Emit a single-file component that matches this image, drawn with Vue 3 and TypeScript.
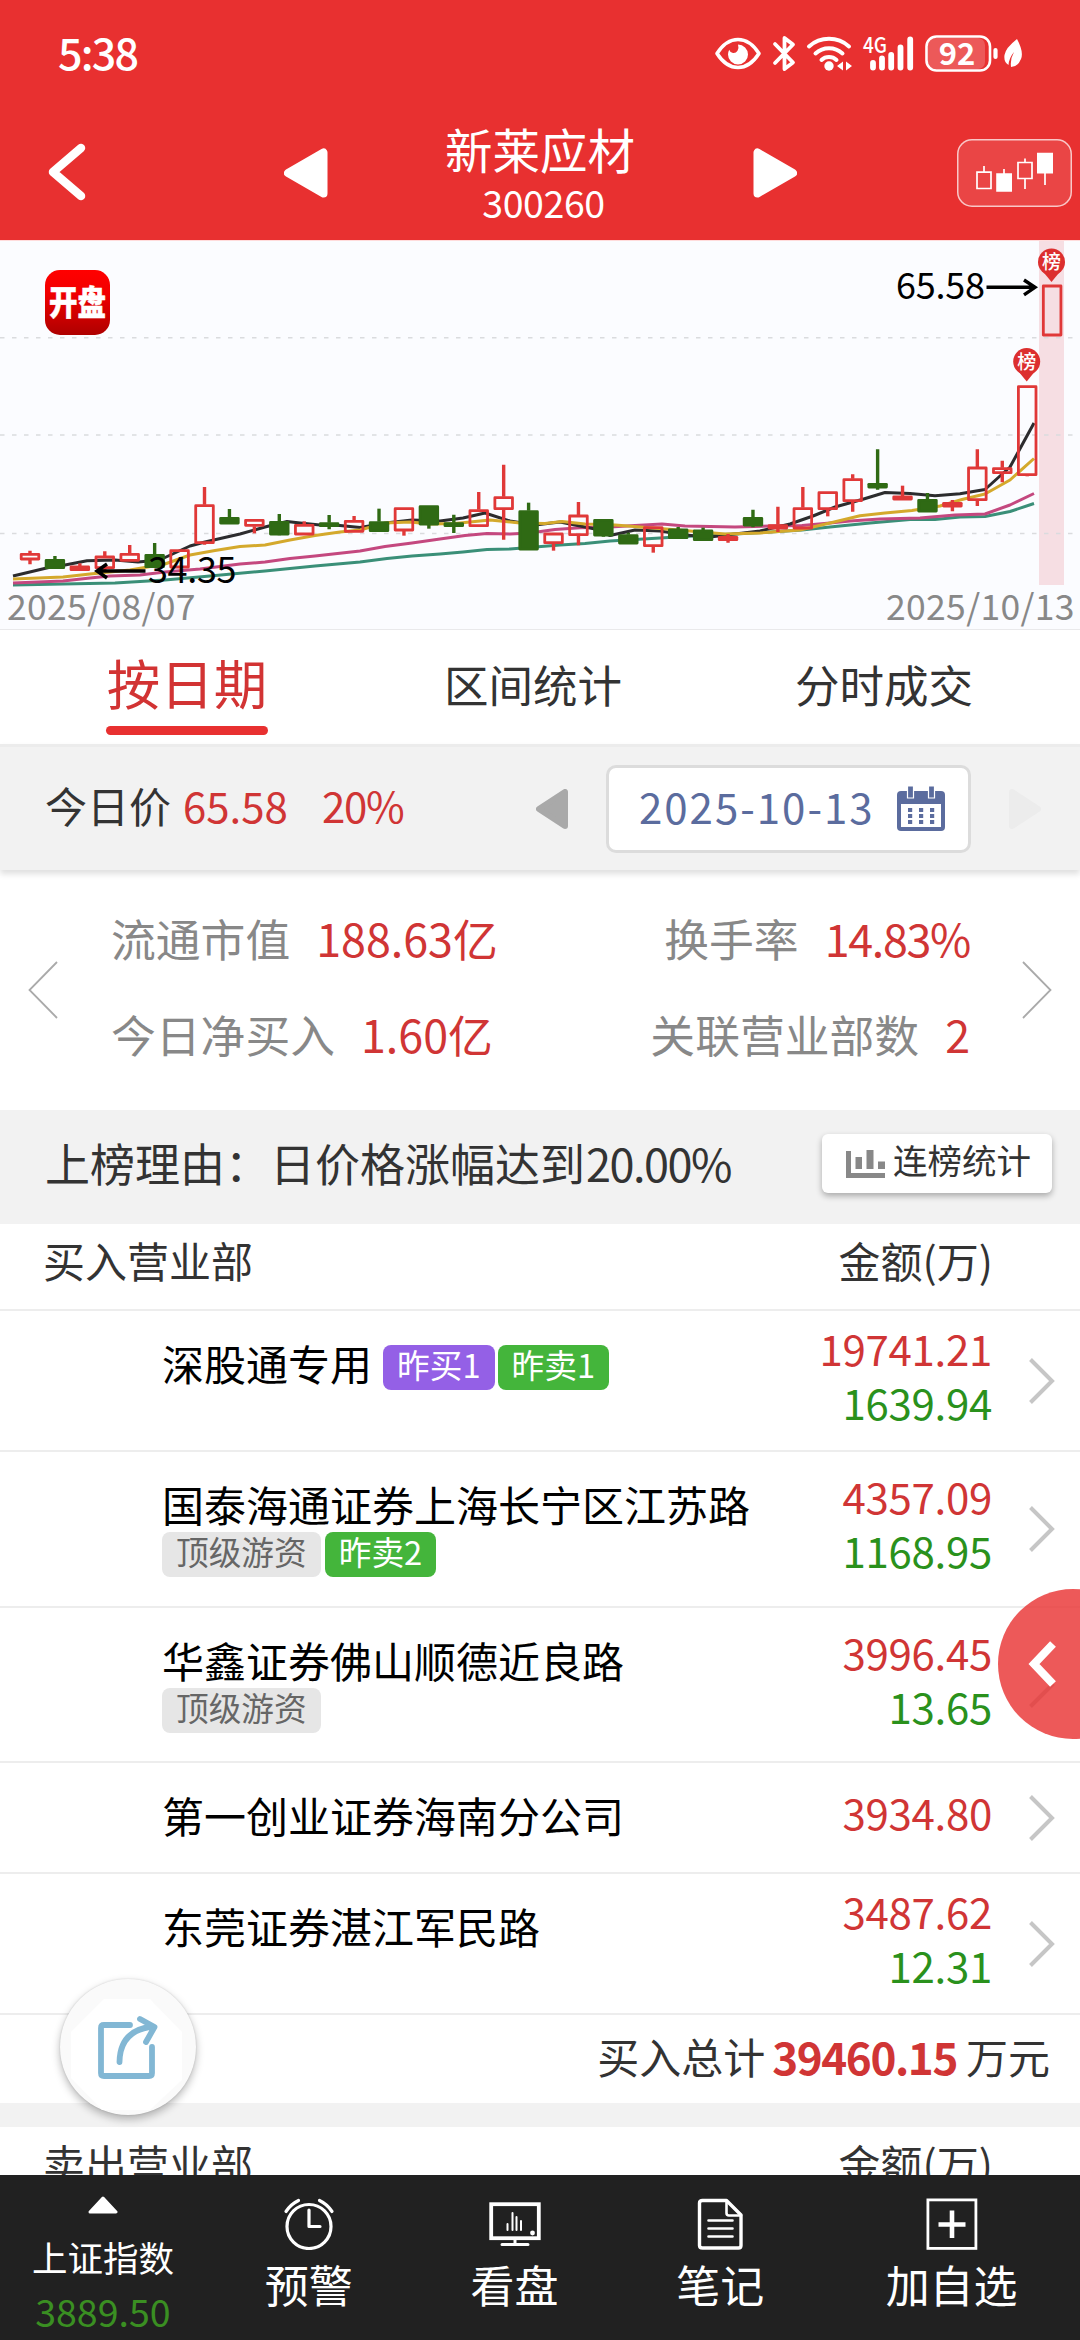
<script setup lang="ts">
type Kind = 'r' | 'g'
// kind, high, body top, body bottom, low (chart units, three per pixel)
type Candle = [Kind, number, number, number, number]

const candles: Candle[] = [
  ['r', 932, 940, 960, 973], ['g', 948, 958, 986, 986], ['r', 970, 978, 992, 992], ['r', 934, 948, 986, 990],
  ['r', 915, 940, 964, 964], ['g', 909, 943, 983, 983], ['r', 929, 929, 984, 984], ['r', 741, 794, 911, 914],
  ['g', 807, 832, 852, 852], ['r', 838, 838, 859, 880], ['g', 822, 844, 885, 886], ['r', 844, 853, 885, 885],
  ['g', 825, 848, 860, 868], ['r', 828, 841, 877, 877], ['g', 806, 845, 875, 875], ['r', 803, 803, 873, 887],
  ['g', 797, 797, 855, 866], ['g', 824, 848, 860, 879], ['r', 756, 809, 860, 860], ['r', 674, 770, 809, 899],
  ['g', 788, 812, 930, 930], ['r', 879, 879, 911, 932], ['r', 786, 825, 887, 916], ['g', 837, 838, 888, 890],
  ['g', 878, 884, 912, 912], ['r', 860, 860, 920, 938], ['g', 861, 867, 896, 896], ['g', 863, 870, 902, 902],
  ['r', 882, 889, 902, 908], ['g', 809, 832, 858, 862], ['r', 800, 854, 867, 876], ['r', 741, 803, 867, 867],
  ['r', 755, 755, 809, 829], ['r', 703, 716, 785, 815], ['g', 628, 730, 744, 749], ['r', 737, 768, 780, 780],
  ['g', 759, 778, 816, 816], ['r', 780, 787, 801, 814], ['r', 628, 681, 782, 798], ['r', 662, 683, 701, 727],
  ['r', 437, 437, 707, 709], ['r', 135, 135, 288, 288],
]

const bars = candles.map(([kind, hi, top, bottom, lo], i) => {
  const x = 30 + i * 24.93
  return {
    x,
    color: kind === 'r' ? '#e03838' : '#2f6a14',
    fill: kind === 'r' ? 'none' : '#2f6a14',
    hi: hi / 3,
    lo: lo / 3,
    top: top / 3,
    bottom: bottom / 3,
    y: top / 3 + 1,
    h: Math.max((bottom - top) / 3 - 2, 1.5),
  }
})

const averages = [
  { color: '#3a8f78', points: '13,345 63,344 115,343 165,340 210,336 265,331 315,326 360,322 387,318.5 412,316 440,314 463,312 487,309.5 510,309 535,307 560,305 585,303.5 610,301 660,298 710,295 735,294 762,292.5 802,290 830,287 870,283 910,279.5 935,279.5 960,277 985,276.5 1010,271.5 1034,263.5' },
  { color: '#c4487f', points: '13,343 63,341 90,338 110,336 140,335 165,332 200,329 240,324 265,322 290,318.5 315,316 360,311 385,306.5 412,303 440,299 465,295.5 487,293.5 510,294 530,293 555,289.5 580,287.7 610,287 635,285.5 662,284 685,286 735,287 770,286 802,285.5 830,283 850,281 880,279 920,278 955,275 985,274 1010,265 1034,253.5' },
  { color: '#2c2c2e', points: '13,336 55,326 65,325 87,320.7 115,320 138,322 160,320 165,317.5 190,306 205,302 240,294 265,287 287,281.5 300,283 320,285 340,285.5 360,287.5 390,282.5 412,280 440,281 463,278 485,273 510,281 535,285 560,282 580,286 595,289 610,295.5 635,290 660,291 685,295 710,297 735,294 760,291 790,284 813,276 835,267 862,259.5 885,252.5 910,253.5 935,255.7 960,253.7 985,249.5 1010,227 1034,183' },
  { color: '#d4a92c', points: '13,339 63,337 90,334 130,330 165,324 190,315 215,310.5 240,306.5 265,305 290,300 315,295.5 340,292 360,290 385,283 410,282 430,284 455,283.5 490,280 520,283 545,283.5 562,281.5 585,284 615,285 640,287 660,288.5 690,291 725,294 760,293 800,290 830,283 860,275.7 885,273 912,270.5 940,266 962,259.5 985,254 1010,240 1034,218.5' },
]

const gridLines = [97.7, 195, 293.5]
const pins = [{ x: 1051.5, y: 22 }, { x: 1026.7, y: 121.5 }]

interface Tag { text: string; tone: 'violet' | 'green' | 'gray' }
interface Seat { name: string; inline?: boolean; tags: Tag[]; buy: string; sell?: string; height: number }

const seats: Seat[] = [
  { name: '深股通专用', inline: true, tags: [{ text: '昨买1', tone: 'violet' }, { text: '昨卖1', tone: 'green' }], buy: '19741.21', sell: '1639.94', height: 141 },
  { name: '国泰海通证券上海长宁区江苏路', tags: [{ text: '顶级游资', tone: 'gray' }, { text: '昨卖2', tone: 'green' }], buy: '4357.09', sell: '1168.95', height: 156 },
  { name: '华鑫证券佛山顺德近良路', tags: [{ text: '顶级游资', tone: 'gray' }], buy: '3996.45', sell: '13.65', height: 155 },
  { name: '第一创业证券海南分公司', tags: [], buy: '3934.80', height: 111 },
  { name: '东莞证券湛江军民路', tags: [], buy: '3487.62', sell: '12.31', height: 141 },
]
</script>

<template>
  <div class="screen">
    <header class="top">
      <div class="status">
        <span class="time">5:38</span>
        <svg class="status-icons" width="312" height="60" viewBox="712 24 312 60" fill="none" stroke="#fff" stroke-linecap="round" stroke-linejoin="round">
          <path d="M717 53.500Q726 39.500 738 39.500T759 53.500Q750 67.500 738 67.500T717 53.500Z" stroke-width="3.600" />
          <path d="M738 44.500a10 10 0 1 1-10 10q0-2.500 1.200-4.800a4.600 4.600 0 0 0 8.300 1.100q1.600-3.100.500-6.300Z" fill="#fff" stroke="none" />
          <path d="M775 44l18 18.500-8.500 6.500V38l8.500 6.500L775 63" stroke-width="3.800" />
          <path d="M809 46.500a30 30 0 0 1 40 0M815.500 53.500a20 20 0 0 1 27 0M821.500 60a11 11 0 0 1 15 0" stroke-width="4" />
          <circle cx="829" cy="66" r="4.700" fill="#fff" stroke="none" />
          <path d="M843 61.500v9l-6-4.500zM846 61.500v9l6-4.500z" fill="#fff" stroke="none" />
          <path d="M873 63v4.500M882 58.500v9M891.200 55v12.500M900.500 47.500v20M910.200 39.500v28" stroke-width="5.800" />
          <text x="863" y="53" textLength="24" lengthAdjust="spacingAndGlyphs" class="net">4G</text>
          <rect x="928" y="38" width="57" height="31" rx="7" fill="#fff" fill-opacity=".2" stroke="none" />
          <rect x="926.500" y="36.500" width="63.500" height="34" rx="10" stroke-width="2.600" />
          <text x="957" y="65" text-anchor="middle" class="battery">92</text>
          <path d="M995.500 50v7" stroke-width="4.200" />
          <path d="M1017 39q7 13 4 20-3 8-10 8-1-8 3-15-5 6-5.500 13-5-3-4-10 1-7 12.500-16Z" fill="#fff" stroke="none" />
        </svg>
      </div>
      <div class="nav">
        <svg class="back" width="44" height="66" viewBox="0 0 44 66"><path d="M38 9 10 33l28 24" fill="none" stroke="#fff" stroke-width="8.500" stroke-linecap="round" stroke-linejoin="round" /></svg>
        <svg class="tri prev" width="44" height="50" viewBox="0 0 44 50"><path d="M4 25 39.500 4.500v41Z" fill="#fff" stroke="#fff" stroke-width="8" stroke-linejoin="round" /></svg>
        <div class="title">
          <div class="name">新莱应材</div>
          <div class="code">300260</div>
        </div>
        <svg class="tri" width="44" height="50" viewBox="0 0 44 50"><path d="M40 25 4.500 4.500v41Z" fill="#fff" stroke="#fff" stroke-width="8" stroke-linejoin="round" /></svg>
        <div class="kline">
          <svg width="115" height="68" viewBox="955 139 115 68" fill="none" stroke="#fff" stroke-width="1.700">
            <path d="M975 172.200h14v16.300h-14zM982 172v-6M1016 162.500h14v16h-14zM1023 162.500v-4M1023 179v10M1002 174v-5M1043 173v12" />
            <path d="M994.200 173.200h15.800v18.500h-15.800zM1035 152.700h16v20.800h-16z" fill="#fff" stroke="none" />
          </svg>
        </div>
      </div>
    </header>

    <section class="chart">
      <svg width="1080" height="390" viewBox="0 0 1080 390">
        <defs>
          <linearGradient id="logo" x1="0" y1="0" x2="0" y2="1">
            <stop offset="0" stop-color="#ff0000" />
            <stop offset=".35" stop-color="#f20000" />
            <stop offset="1" stop-color="#ae0000" />
          </linearGradient>
        </defs>
        <rect width="1080" height="390" fill="#fbfcff" />
        <rect width="1080" height="1" fill="#ffdcdc" />
        <rect y="389" width="1080" height="1" fill="#e9e9eb" />
        <rect x="1039" y="1" width="25" height="344" fill="#f6dee3" />
        <line v-for="y in gridLines" :key="y" x1="0" x2="1075" :y1="y" :y2="y" stroke="#dadbde" stroke-width="1.500" stroke-dasharray="4.500 7.500" />
        <rect x="45" y="30" width="65" height="65" rx="15" fill="url(#logo)" />
        <text x="77.500" y="75" text-anchor="middle" textLength="57" lengthAdjust="spacingAndGlyphs" class="logo">开盘</text>

        <polyline v-for="line in averages" :key="line.color" :points="line.points" fill="none" :stroke="line.color" stroke-width="3" stroke-linejoin="round" />
        <g v-for="bar in bars" :key="bar.x" :stroke="bar.color">
          <path :d="`M${bar.x} ${bar.hi}V${bar.top}M${bar.x} ${bar.bottom}V${bar.lo}`" stroke-width="3.400" />
          <rect :x="bar.x - 8.800" :y="bar.y" width="17.600" :height="bar.h" :fill="bar.fill" stroke-width="2.800" stroke-linejoin="round" />
        </g>

        <g v-for="pin in pins" :key="pin.x">
          <path :d="`M${pin.x - 9} ${pin.y + 9}L${pin.x} ${pin.y + 20}L${pin.x + 9} ${pin.y + 9}Z`" fill="#dc2f2f" />
          <circle :cx="pin.x" :cy="pin.y" r="13.500" fill="#dc2f2f" />
          <text :x="pin.x" :y="pin.y + 7" text-anchor="middle" class="pin">榜</text>
        </g>

        <g fill="none" stroke="#000" stroke-width="3.400">
          <path d="M986.500 47.300H1034M1024 40l11 7.300-11 7.500" />
          <path d="M145.500 331H98M107 324l-10 7 10 7" />
        </g>
        <text x="896" y="59" textLength="89" class="price">65.58</text>
        <text x="148" y="342.500" textLength="88.500" class="price">34.35</text>
        <text x="7" y="379.500" textLength="188.500" class="date">2025/08/07</text>
        <text x="886" y="379.500" textLength="188.500" class="date">2025/10/13</text>
      </svg>
    </section>

    <nav class="tabs">
      <div class="tab active">按日期</div>
      <div class="tab second">区间统计</div>
      <div class="tab third">分时成交</div>
    </nav>

    <section class="datebar">
      <span class="today">今日价</span>
      <span class="red today-price">65.58</span>
      <span class="red percent">20%</span>
      <svg class="day-prev" width="32" height="40" viewBox="0 0 32 40"><path d="M3 20 29 3v34Z" fill="#a9a9a9" stroke="#a9a9a9" stroke-width="6" stroke-linejoin="round" /></svg>
      <div class="picker">
        <span>2025-10-13</span>
        <svg width="48" height="46" viewBox="0 0 48 46">
          <path d="M4 5h40q4 0 4 4v32q0 4-4 4H4q-4 0-4-4V9q0-4 4-4Z" fill="#5b6c9e" />
          <rect x="4" y="18" width="40" height="23" fill="#fff" />
          <path d="M10.500 0h6v12h-6zM31.500 0h6v12h-6z" fill="#5b6c9e" stroke="#fff" stroke-width="1.200" />
          <path d="M11 22h4.200v4H11zM22 22h4.200v4H22zM33 22h4.200v4H33zM11 28h4.200v4H11zM22 28h4.200v4H22zM33 28h4.200v4H33zM11 34h4.200v4H11zM22 34h4.200v4H22zM33 34h4.200v4H33z" fill="#5b6c9e" />
        </svg>
      </div>
      <svg class="day-next" width="32" height="40" viewBox="0 0 32 40"><path d="M29 20 3 3v34Z" fill="#ececec" stroke="#ececec" stroke-width="6" stroke-linejoin="round" /></svg>
    </section>

    <section class="stats">
      <svg width="30" height="58" viewBox="0 0 30 58"><path d="M29 1 1.500 29 29 57" fill="none" stroke="#aaa" stroke-width="1.800" /></svg>
      <div class="col left">
        <div class="stat"><span>流通市值</span><b>188.63亿</b></div>
        <div class="stat"><span>今日净买入</span><b>1.60亿</b></div>
      </div>
      <div class="col right">
        <div class="stat"><span>换手率</span><b class="turnover">14.83%</b></div>
        <div class="stat"><span>关联营业部数</span><b>2</b></div>
      </div>
      <svg width="30" height="58" viewBox="0 0 30 58"><path d="M1 1l27.500 28L1 57" fill="none" stroke="#aaa" stroke-width="1.800" /></svg>
    </section>

    <section class="reason">
      <span class="reason-text">上榜理由：日价格涨幅达到<span class="rise">20.00%</span></span>
      <button class="streak">
        <svg width="39" height="28" viewBox="0 0 39 28" fill="#888"><path d="M0 1h5v22h34v5H0zM9.500 7H16v12H9.500zM20.500 0h7v19h-7zM32 11.500h7V19h-7z" /></svg>
        <span>连榜统计</span>
      </button>
    </section>

    <section>
      <div class="thead"><span>买入营业部</span><span>金额(万)</span></div>
      <div v-for="seat in seats" :key="seat.name" class="seat" :style="{ height: seat.height + 'px' }">
        <div class="who" :class="{ inline: seat.inline }">
          <div class="seat-name">{{ seat.name }}</div>
          <div v-if="seat.tags.length" class="tags">
            <span v-for="tag in seat.tags" :key="tag.text" class="tag" :class="tag.tone">{{ tag.text }}</span>
          </div>
        </div>
        <div class="money">
          <div class="red">{{ seat.buy }}</div>
          <div v-if="seat.sell" class="green-text">{{ seat.sell }}</div>
        </div>
        <svg class="go" width="26" height="46" viewBox="0 0 26 46"><path d="M1.500 1.500 23 23 1.500 44.500" fill="none" stroke="#c6c6c6" stroke-width="4" /></svg>
      </div>
      <div class="total"><span>买入总计</span><strong>39460.15</strong><span>万元</span></div>
    </section>

    <section class="sell">
      <div class="thead"><span>卖出营业部</span><span>金额(万)</span></div>
    </section>

    <footer class="bottom">
      <div class="item index">
        <svg width="30" height="18" viewBox="0 0 30 18"><path d="M15 2 28 16H2Z" fill="#fff" stroke="#fff" stroke-width="3" stroke-linejoin="round" /></svg>
        <span class="index-name">上证指数</span>
        <span class="index-value">3889.50</span>
      </div>
      <div class="item">
        <svg width="52" height="52" viewBox="0 0 52 52" fill="none" stroke="#fff" stroke-width="3.200" stroke-linecap="round" stroke-linejoin="round">
          <circle cx="26" cy="28.500" r="22" /><path d="M26 12v16.500h11" /><path d="M3 13.500Q8 6 15.500 2.500M49 13.500Q44 6 36.500 2.500" />
        </svg>
        <span>预警</span>
      </div>
      <div class="item">
        <svg width="52" height="52" viewBox="0 0 52 52" fill="none" stroke="#fff" stroke-linecap="round">
          <rect x="2.200" y="6.200" width="47.600" height="34" stroke-width="3.800" />
          <path d="M18.500 26v6M23.500 15v17M27.500 19v13M32 23v9" stroke-width="2" />
          <circle cx="43.500" cy="35" r="2.400" fill="#fff" stroke="none" />
          <path d="M26 41v4M13 46.500h26" stroke-width="3" />
        </svg>
        <span>看盘</span>
      </div>
      <div class="item">
        <svg width="52" height="52" viewBox="0 0 52 52" fill="none" stroke="#fff" stroke-width="3.400" stroke-linecap="round" stroke-linejoin="round">
          <path d="M8.500 2.500H32.500L47 17V47.500q0 2.500-2.500 2.500H8.500Q5.500 50 5.500 47.500V5q0-2.500 3-2.500Z" />
          <path d="M32.500 3v12q0 2.500 2.500 2.500h12" stroke-width="2.600" />
          <path d="M14.500 22.500h24M14.500 30.500h24M14.500 38.500h24" stroke-width="2.600" />
        </svg>
        <span>笔记</span>
      </div>
      <div class="item last">
        <svg width="52" height="52" viewBox="0 0 52 52" fill="none" stroke="#fff">
          <rect x="1.900" y="1.900" width="48" height="48.500" stroke-width="2.800" /><path d="M26 12.500v27.500M12.500 26.500h27" stroke-width="4.600" />
        </svg>
        <span>加自选</span>
      </div>
    </footer>

    <div class="drawer">
      <svg width="32" height="48" viewBox="0 0 32 48"><path d="M26 4 7 24l19 20" fill="none" stroke="#fff" stroke-width="8" /></svg>
    </div>
    <div class="share">
      <svg width="136" height="136" viewBox="0 0 136 136">
        <path d="M44 20h46l32 33v48L90 131H42L11 99V53Z" fill="#fff" />
        <g fill="none" stroke="#82b7d4" stroke-width="5.800" stroke-linecap="round" stroke-linejoin="round">
          <path d="M70 46H44q-3 0-3 3v45q0 3 3 3h45q3 0 3-3V68" />
          <path d="M59.500 83Q60 51 93 47.500M80 40l14.500 8L86 63" />
        </g>
      </svg>
    </div>
  </div>
</template>

<style>
body {
  margin: 0;
  overflow: hidden;
}
</style>

<style scoped>
.screen {
  position: relative;
  width: 1080px;
  height: 2340px;
  overflow: hidden;
  display: flex;
  flex-direction: column;
  background: #fff;
  color: #333;
  font-family: "Noto Sans CJK SC", "Noto Sans", sans-serif;
  font-size: 42px;
}
.screen > * { flex-shrink: 0; }
svg { display: block; }
.red { color: #d03535; }
.green-text { color: #2a911c; }

.top { height: 240px; background: #e83030; color: #fff; }
.status {
  height: 104px;
  display: flex;
  justify-content: space-between;
  padding: 0 56px 0 58px;
}
.time { font-size: 43px; font-weight: 500; line-height: 102px; letter-spacing: -1.800px; }
.status-icons { margin-top: 24px; }
.net { font-size: 22px; font-weight: 500; fill: #fff; stroke: none; }
.battery { font-size: 31px; font-weight: 700; fill: #fff; stroke: none; }
.nav {
  height: 136px;
  display: flex;
  align-items: flex-start;
}
.back { margin: 35px 0 0 43px; }
.tri { margin-top: 44px; }
.prev { margin-left: 197px; }
.title { width: 192px; margin: 10px 117px 0 116px; text-align: center; white-space: nowrap; }
.name { font-size: 47.500px; line-height: 70px; }
.code { font-size: 37.500px; line-height: 36px; padding-left: 7px; letter-spacing: -.4px; }
.kline {
  box-sizing: border-box;
  width: 115px;
  height: 68px;
  margin: 35px 0 0 160px;
  border-radius: 15px;
  background: rgba(255, 255, 255, .1);
  box-shadow: inset 0 0 0 1.500px rgba(255, 255, 255, .7);
}

.chart { height: 390px; }
.logo { font-size: 34px; font-weight: 900; fill: #fff; stroke: #fff; stroke-width: .5; }
.pin { font-size: 19px; font-weight: 500; fill: #fff; }
.price { font-size: 36px; fill: #000; }
.date { font-size: 35.500px; fill: #888; }

.tabs { height: 114px; display: flex; }
.tab { font-size: 44.500px; line-height: 108px; white-space: nowrap; }
.tab.active {
  box-sizing: border-box;
  position: relative;
  width: 162px;
  height: 105px;
  margin-left: 106px;
  color: #d23333;
  font-size: 53.500px;
  line-height: 103px;
  text-align: center;
}
.tab.active::after {
  content: "";
  position: absolute;
  left: 0;
  right: 0;
  bottom: 0;
  height: 9px;
  border-radius: 5px;
  background: #e83030;
}
.tab.second { margin-left: 176px; }
.tab.third { margin-left: 173px; }

.datebar {
  position: relative;
  height: 126px;
  box-sizing: border-box;
  padding-left: 45px;
  display: flex;
  align-items: center;
  background: #f2f2f2;
  border-top: 3px solid #ececec;
  box-shadow: 0 4px 6px rgba(0, 0, 0, .13);
  line-height: 60px;
}
.datebar > span { margin-top: -7px; white-space: nowrap; }
.today { width: 138px; }
.today-price { width: 139px; }
.percent { letter-spacing: -1.300px; }
.day-prev { margin-left: auto; }
.picker {
  box-sizing: border-box;
  width: 365px;
  height: 88px;
  margin: 0 38px;
  padding: 0 23px 0 30px;
  display: flex;
  align-items: center;
  justify-content: space-between;
  border: 3px solid #dcdcdc;
  border-radius: 10px;
  background: #fff;
  color: #5b6c9e;
}
.picker span { letter-spacing: 2px; margin-top: -5px; white-space: nowrap; }
.day-next { margin-right: 39px; }

.stats {
  height: 240px;
  box-sizing: border-box;
  padding: 0 28px 0;
  display: flex;
  align-items: center;
  font-size: 44.800px;
}
.col { display: flex; flex-direction: column; gap: 26px; margin-top: -9px; }
.col.left { margin-left: 53px; }
.col.right { margin-left: auto; margin-right: 52px; align-items: flex-end; }
.stat { line-height: 70px; color: #888; display: flex; gap: 26px; white-space: nowrap; }
.stat b { font-weight: 400; color: #d03535; }
.stat .turnover { letter-spacing: -1.300px; }

.reason {
  height: 114px;
  padding: 0 28px 0 45px;
  box-sizing: border-box;
  display: flex;
  justify-content: space-between;
  background: #f2f2f2;
  font-size: 45px;
}
.reason-text { line-height: 106px; white-space: nowrap; }
.rise { margin-left: 1px; letter-spacing: -1.500px; }
.streak {
  width: 230px;
  height: 59px;
  margin: 24px 0 0;
  padding: 0 0 0 24px;
  border: 0;
  border-radius: 6px;
  background: #fff;
  box-shadow: 0 3px 6px rgba(0, 0, 0, .3);
  display: flex;
  align-items: center;
  gap: 8px;
  color: #333;
  font-family: inherit;
  font-size: 34.500px;
  line-height: 50px;
  white-space: nowrap;
}
.streak span { margin-top: -9px; }

.thead {
  height: 87px;
  box-sizing: border-box;
  padding: 0 87px 0 43px;
  display: flex;
  justify-content: space-between;
  border-bottom: 2px solid #ededed;
  line-height: 72px;
}
.seat {
  box-sizing: border-box;
  display: flex;
  padding: 0 25px 0 162px;
  border-bottom: 2px solid #ededed;
  line-height: 54px;
}
.who { flex: 1; padding-top: 25px; color: #000; white-space: nowrap; }
.who.inline { display: flex; gap: 11px; }
.tags { display: flex; gap: 3px; height: 45px; margin-top: 1px; }
.inline .tags { margin-top: 9px; }
.tag {
  height: 45px;
  padding: 0 14px;
  border-radius: 8px;
  font-size: 32.700px;
  line-height: 37px;
  color: #fff;
}
.violet { background: #9460e6; }
.green { background: #44b53b; }
.gray { background: #e6e6e6; color: #666; margin-right: 1px; }
.money {
  display: flex;
  flex-direction: column;
  justify-content: center;
  padding-bottom: 12px;
  margin-right: 37px;
  text-align: right;
  letter-spacing: -.3px;
}
.go { align-self: center; }

.total {
  height: 88px;
  padding-right: 30px;
  display: flex;
  justify-content: flex-end;
  line-height: 82px;
}
.total strong { margin: 0 9px 0 7px; color: #d03535; font-size: 44px; letter-spacing: -1.400px; }
.sell {
  height: 48px;
  overflow: hidden;
  border-top: 24px solid #f2f2f2;
}

.bottom {
  height: 165px;
  display: flex;
  background: #212121;
  color: #fff;
  font-size: 44px;
}
.item {
  width: 206px;
  padding-top: 23px;
  display: flex;
  flex-direction: column;
  align-items: center;
  line-height: 68px;
}
.item.last { width: 257px; }
.index { box-sizing: border-box; padding-top: 21px; }
.index-name { font-size: 35.500px; line-height: 54px; margin-top: 16px; }
.index-value { font-size: 37.500px; line-height: 54px; color: #3a8f22; }

.drawer {
  position: absolute;
  left: 998px;
  top: 1589px;
  width: 150px;
  height: 150px;
  border-radius: 50%;
  background: rgba(232, 48, 48, .8);
}
.drawer svg { margin: 51px 0 0 29px; }
.share {
  position: absolute;
  left: 60px;
  top: 1979px;
  width: 136px;
  height: 136px;
  border-radius: 50%;
  background: #fafafa;
  box-shadow: 0 4px 8px rgba(0, 0, 0, .28), 0 0 2px rgba(0, 0, 0, .15);
}
</style>
